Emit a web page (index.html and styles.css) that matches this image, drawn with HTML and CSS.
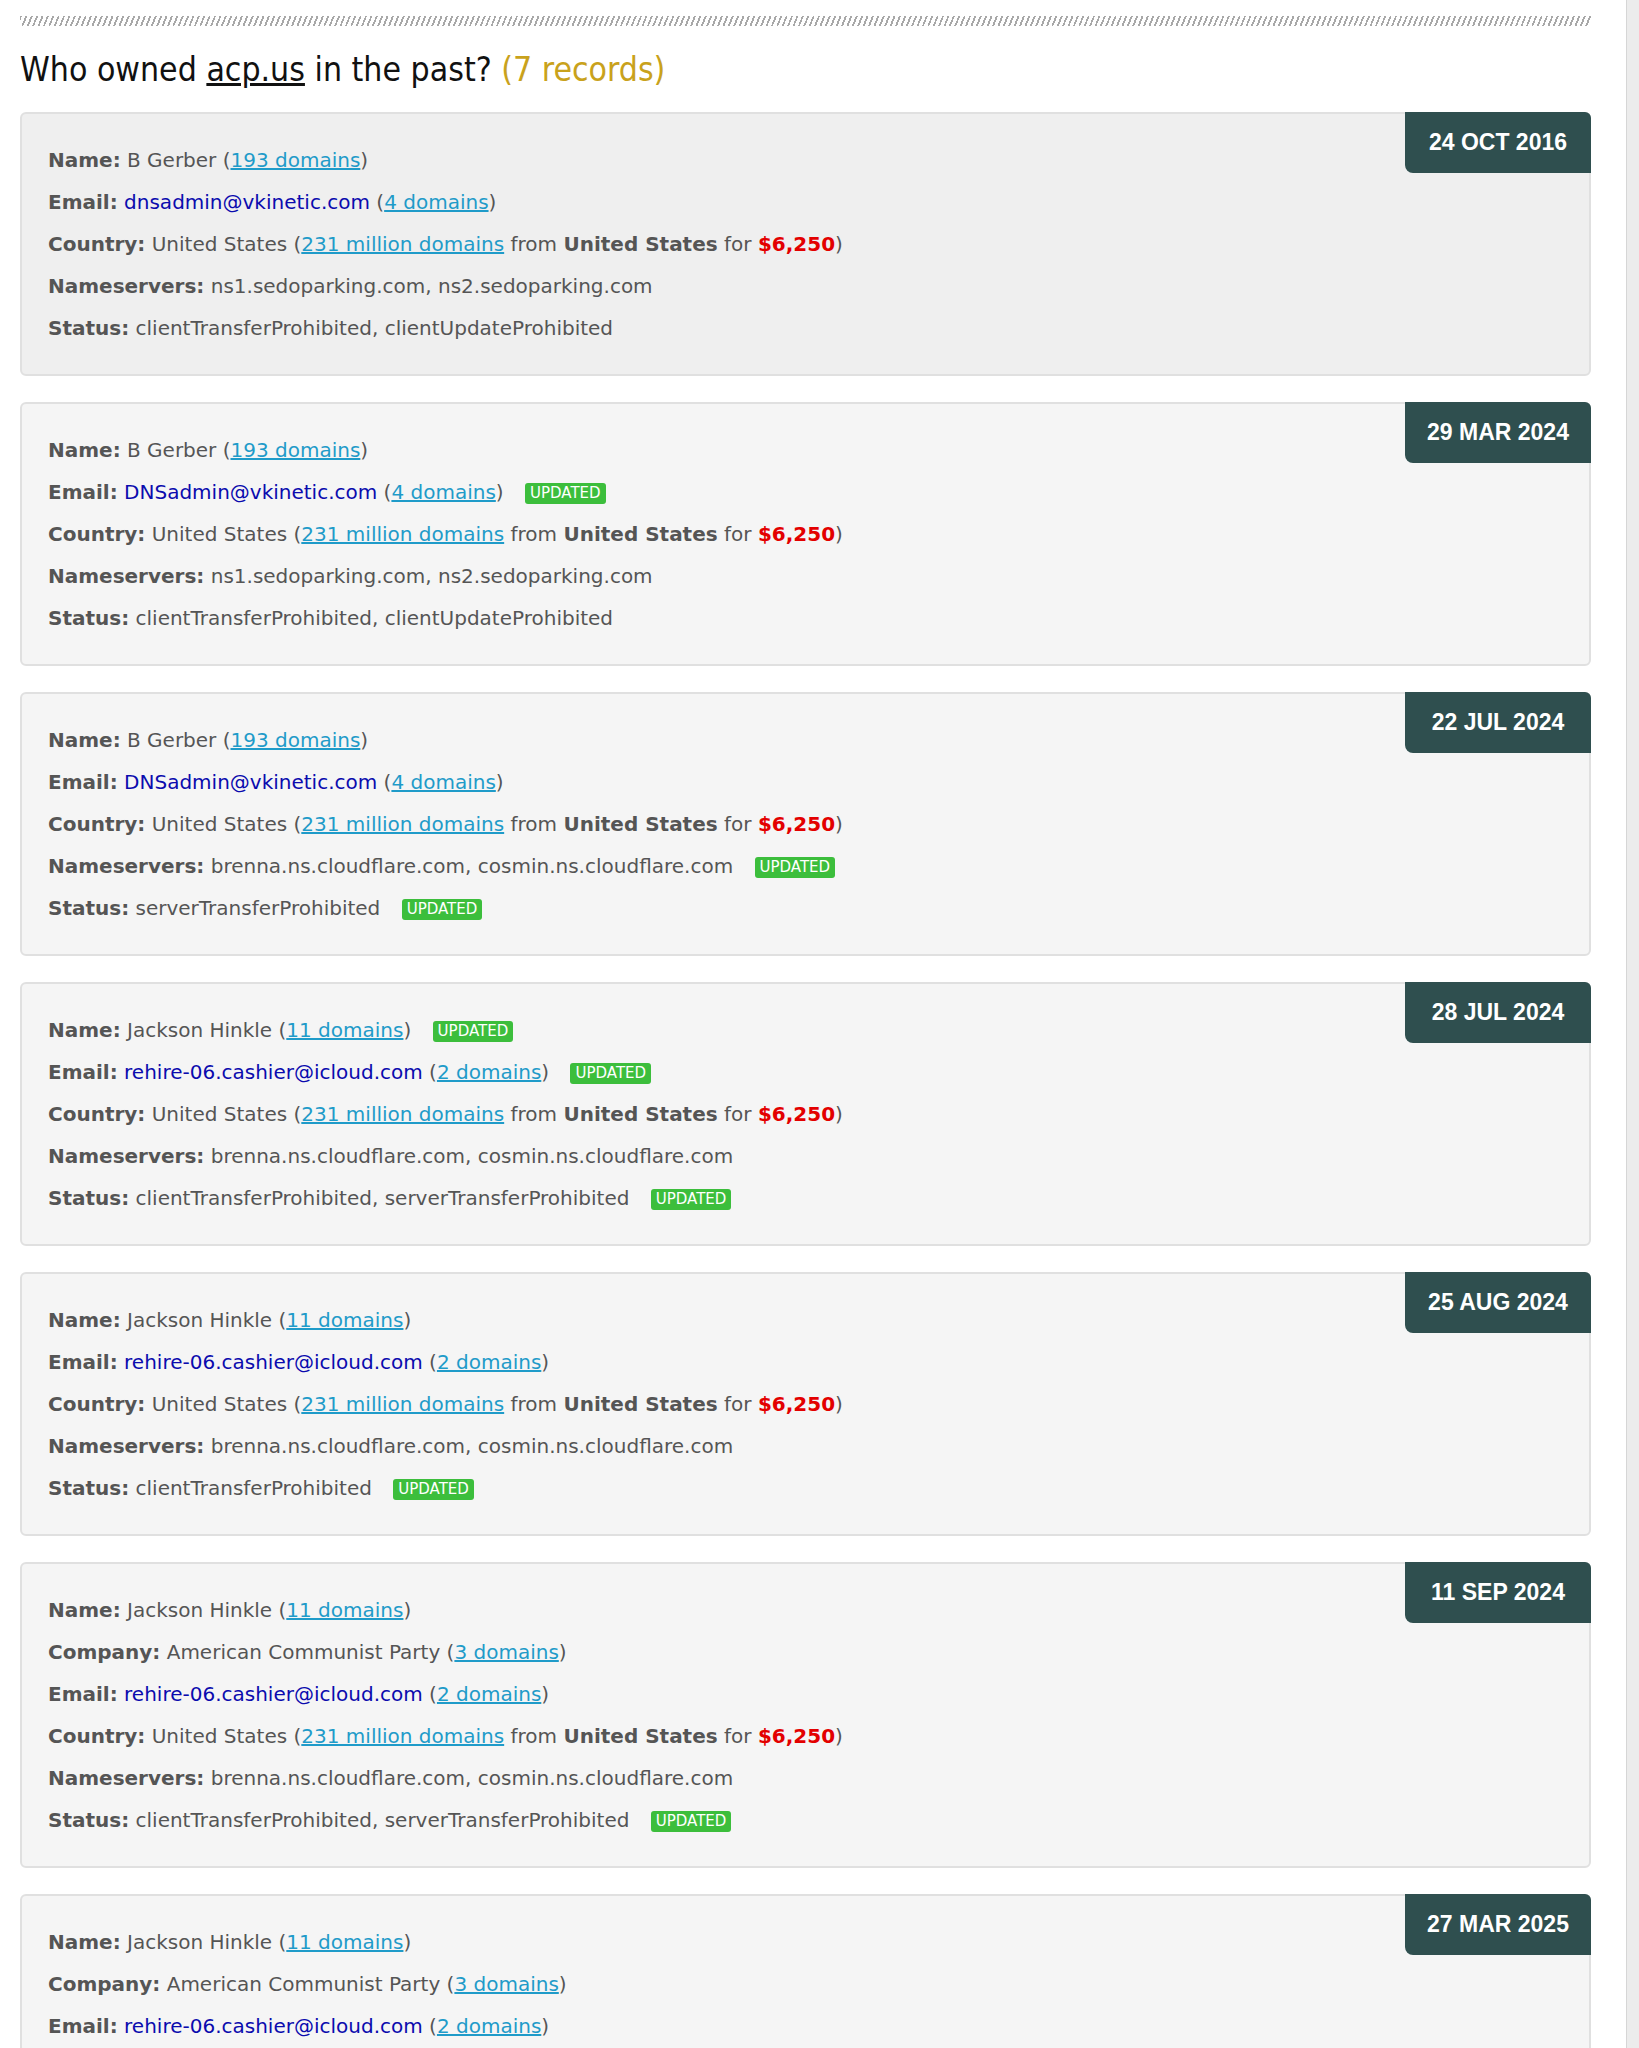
FILE: index.html
```html
<!DOCTYPE html>
<html lang="en">
<head>
  <meta charset="UTF-8">
  <meta name="viewport" content="width=device-width, initial-scale=1.0">
  <title>acp.us - ownership history</title>
  <link rel="stylesheet" href="styles.css">
</head>
<body>
  <main class="page">
    <div class="hatch"></div>
    <h2 class="title">Who owned <a href="#" class="domain">acp.us</a> in the past? <span class="count">(7 records)</span></h2>

    <div class="record first">
      <div class="date">24 OCT 2016</div>
      <div class="row"><b>Name:</b> B Gerber (<a href="#" class="num">193 domains</a>)</div>
      <div class="row"><b>Email:</b> <a href="#" class="mail">dnsadmin@vkinetic.com</a> (<a href="#" class="num">4 domains</a>)</div>
      <div class="row"><b>Country:</b> United States (<a href="#" class="num">231 million domains</a> from <b>United States</b> for <b class="price">$6,250</b>)</div>
      <div class="row"><b>Nameservers:</b> ns1.sedoparking.com, ns2.sedoparking.com</div>
      <div class="row"><b>Status:</b> clientTransferProhibited, clientUpdateProhibited</div>
    </div>

    <div class="record">
      <div class="date">29 MAR 2024</div>
      <div class="row"><b>Name:</b> B Gerber (<a href="#" class="num">193 domains</a>)</div>
      <div class="row"><b>Email:</b> <a href="#" class="mail">DNSadmin@vkinetic.com</a> (<a href="#" class="num">4 domains</a>) <span class="upd">UPDATED</span></div>
      <div class="row"><b>Country:</b> United States (<a href="#" class="num">231 million domains</a> from <b>United States</b> for <b class="price">$6,250</b>)</div>
      <div class="row"><b>Nameservers:</b> ns1.sedoparking.com, ns2.sedoparking.com</div>
      <div class="row"><b>Status:</b> clientTransferProhibited, clientUpdateProhibited</div>
    </div>

    <div class="record">
      <div class="date">22 JUL 2024</div>
      <div class="row"><b>Name:</b> B Gerber (<a href="#" class="num">193 domains</a>)</div>
      <div class="row"><b>Email:</b> <a href="#" class="mail">DNSadmin@vkinetic.com</a> (<a href="#" class="num">4 domains</a>)</div>
      <div class="row"><b>Country:</b> United States (<a href="#" class="num">231 million domains</a> from <b>United States</b> for <b class="price">$6,250</b>)</div>
      <div class="row"><b>Nameservers:</b> brenna.ns.cloudflare.com, cosmin.ns.cloudflare.com <span class="upd">UPDATED</span></div>
      <div class="row"><b>Status:</b> serverTransferProhibited <span class="upd">UPDATED</span></div>
    </div>

    <div class="record">
      <div class="date">28 JUL 2024</div>
      <div class="row"><b>Name:</b> Jackson Hinkle (<a href="#" class="num">11 domains</a>) <span class="upd">UPDATED</span></div>
      <div class="row"><b>Email:</b> <a href="#" class="mail">rehire-06.cashier@icloud.com</a> (<a href="#" class="num">2 domains</a>) <span class="upd">UPDATED</span></div>
      <div class="row"><b>Country:</b> United States (<a href="#" class="num">231 million domains</a> from <b>United States</b> for <b class="price">$6,250</b>)</div>
      <div class="row"><b>Nameservers:</b> brenna.ns.cloudflare.com, cosmin.ns.cloudflare.com</div>
      <div class="row"><b>Status:</b> clientTransferProhibited, serverTransferProhibited <span class="upd">UPDATED</span></div>
    </div>

    <div class="record">
      <div class="date">25 AUG 2024</div>
      <div class="row"><b>Name:</b> Jackson Hinkle (<a href="#" class="num">11 domains</a>)</div>
      <div class="row"><b>Email:</b> <a href="#" class="mail">rehire-06.cashier@icloud.com</a> (<a href="#" class="num">2 domains</a>)</div>
      <div class="row"><b>Country:</b> United States (<a href="#" class="num">231 million domains</a> from <b>United States</b> for <b class="price">$6,250</b>)</div>
      <div class="row"><b>Nameservers:</b> brenna.ns.cloudflare.com, cosmin.ns.cloudflare.com</div>
      <div class="row"><b>Status:</b> clientTransferProhibited <span class="upd">UPDATED</span></div>
    </div>

    <div class="record">
      <div class="date">11 SEP 2024</div>
      <div class="row"><b>Name:</b> Jackson Hinkle (<a href="#" class="num">11 domains</a>)</div>
      <div class="row"><b>Company:</b> American Communist Party (<a href="#" class="num">3 domains</a>)</div>
      <div class="row"><b>Email:</b> <a href="#" class="mail">rehire-06.cashier@icloud.com</a> (<a href="#" class="num">2 domains</a>)</div>
      <div class="row"><b>Country:</b> United States (<a href="#" class="num">231 million domains</a> from <b>United States</b> for <b class="price">$6,250</b>)</div>
      <div class="row"><b>Nameservers:</b> brenna.ns.cloudflare.com, cosmin.ns.cloudflare.com</div>
      <div class="row"><b>Status:</b> clientTransferProhibited, serverTransferProhibited <span class="upd">UPDATED</span></div>
    </div>

    <div class="record">
      <div class="date">27 MAR 2025</div>
      <div class="row"><b>Name:</b> Jackson Hinkle (<a href="#" class="num">11 domains</a>)</div>
      <div class="row"><b>Company:</b> American Communist Party (<a href="#" class="num">3 domains</a>)</div>
      <div class="row"><b>Email:</b> <a href="#" class="mail">rehire-06.cashier@icloud.com</a> (<a href="#" class="num">2 domains</a>)</div>
      <div class="row"><b>Country:</b> United States (<a href="#" class="num">231 million domains</a> from <b>United States</b> for <b class="price">$6,250</b>)</div>
      <div class="row"><b>Nameservers:</b> brenna.ns.cloudflare.com, cosmin.ns.cloudflare.com</div>
      <div class="row"><b>Status:</b> clientTransferProhibited, serverTransferProhibited</div>
    </div>
  </main>
  <div class="track"></div>
</body>
</html>
```

FILE: styles.css
```css
body {
  margin: 0;
  display: flex;
  background: #fff;
  font-family: "DejaVu Sans", Verdana, sans-serif;
  color: #555;
}
.page {
  flex: 1;
  padding: 16px 35px 0 20px;
}
.track {
  width: 12px;
  border-left: 1px solid #d6d6d6;
  background: #ececec;
}
.hatch {
  height: 10px;
  background: repeating-linear-gradient(112deg, #a8a8a8 0 1.8px, transparent 1.8px 5px);
}
.title {
  margin: 24px 0 22px;
  font-family: "DejaVu Sans Condensed", "DejaVu Sans", Tahoma, sans-serif;
  font-size: 33.5px;
  line-height: 40px;
  font-weight: normal;
  color: #111;
}
.title .domain {
  color: #111;
}
.title .count {
  color: #c9a21c;
}
.record {
  position: relative;
  background: #f5f5f5;
  border: 2px solid #e0e0e0;
  border-radius: 6px;
  padding: 25px 26px 24.5px;
  margin-bottom: 26.5px;
}
.record.first {
  background: #efefef;
}
.date {
  position: absolute;
  top: -2px;
  right: -2px;
  width: 186px;
  text-align: center;
  background: #2f4f4f;
  color: #fff;
  font-family: "Liberation Sans", Arial, sans-serif;
  font-weight: bold;
  font-size: 23px;
  line-height: 61px;
  border-radius: 0 6px 0 8px;
}
.row {
  font-size: 20px;
  line-height: 42px;
}
.row b {
  color: #555;
}
.num {
  color: #1f9bc9;
}
.mail {
  color: #0b0bae;
  text-decoration: none;
}
.row b.price {
  color: #e30000;
}
.upd {
  display: inline-block;
  background: #3cbe3c;
  color: #fff;
  font-size: 15px;
  line-height: 21px;
  padding: 0 5px;
  border-radius: 3px;
  margin-left: 15px;
  vertical-align: 1px;
}
```
